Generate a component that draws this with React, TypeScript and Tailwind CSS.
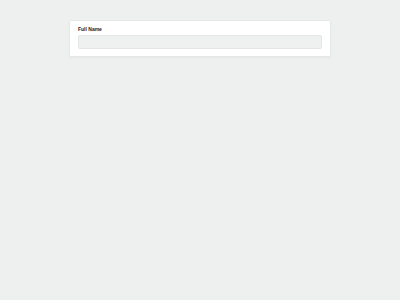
export default function App() {
  return (
    <div className="min-h-[300px] w-[400px] bg-[#eef0f0] pt-[20px] font-['Liberation_Sans',sans-serif]">
      <div className="mx-auto w-[262px] rounded-[2px] border border-[#e6e8e8] bg-white px-[8px] pt-[5px] pb-[7px] shadow-[0_1px_2px_rgba(0,0,0,0.04)]">
        <label className="block text-[5px] leading-[7px] font-bold text-[#222]">Full Name</label>
        <div className="mt-[2px] h-[14px] w-full rounded-[2px] border border-[#e4e6e6] bg-[#eff0f0]" />
      </div>
    </div>
  );
}
